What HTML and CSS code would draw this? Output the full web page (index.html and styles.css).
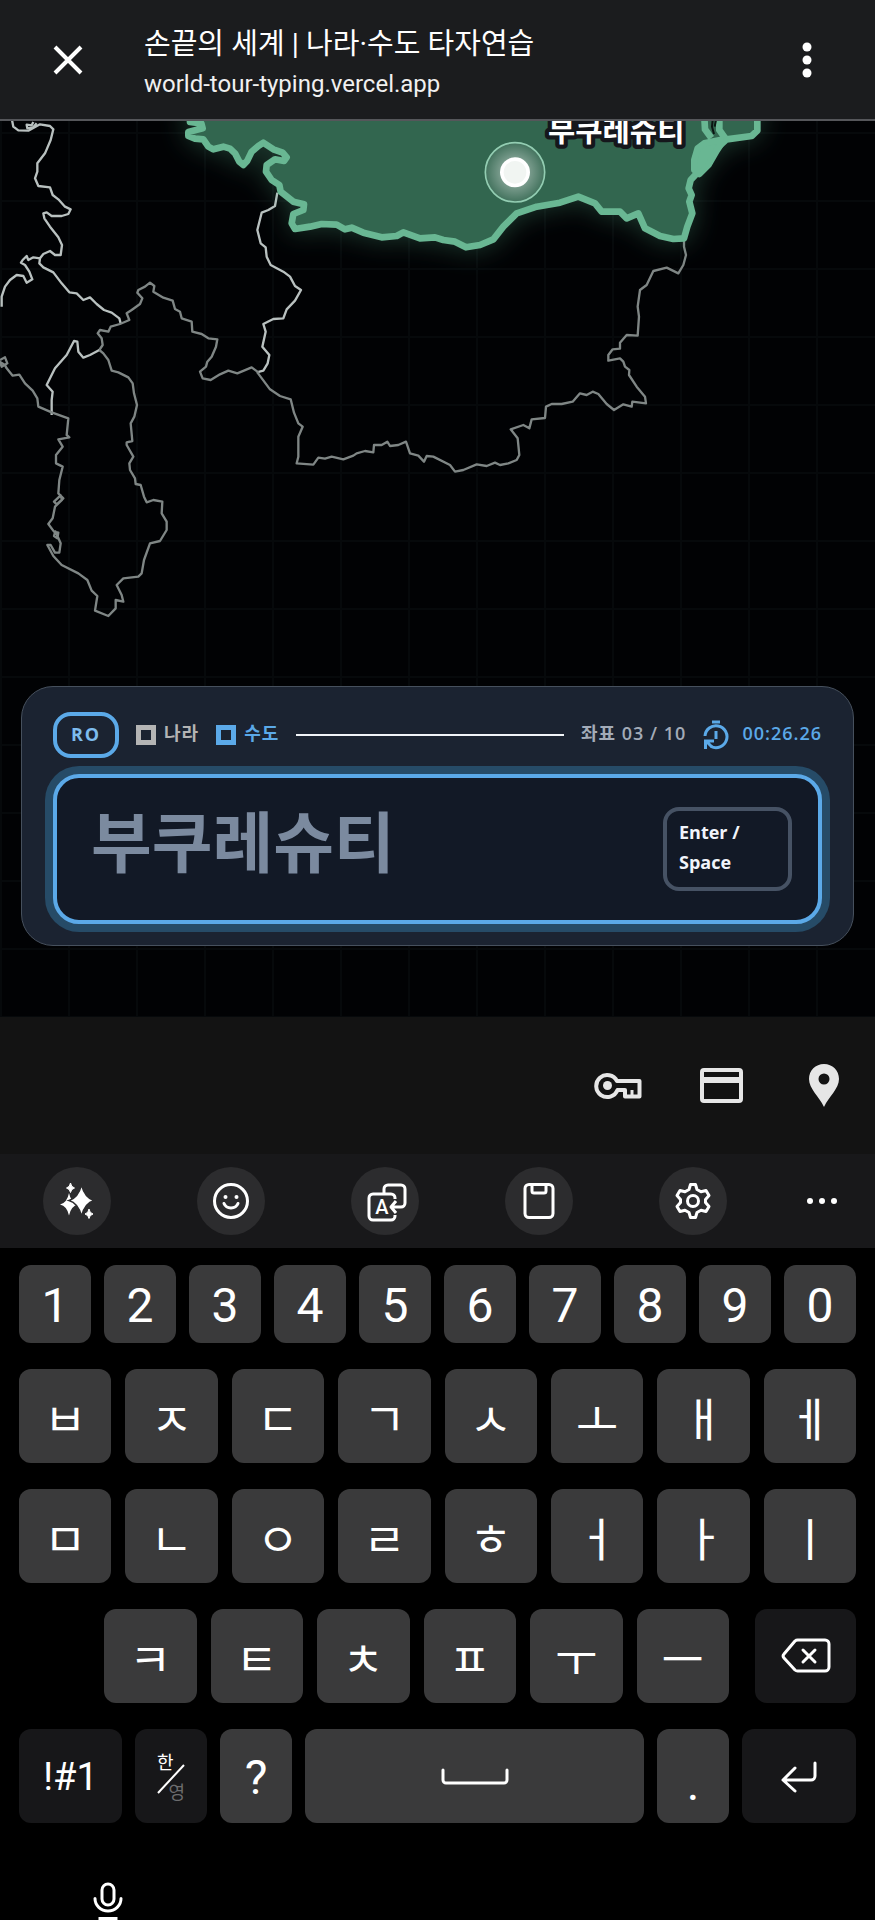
FILE: index.html
```html
<!DOCTYPE html>
<html lang="ko">
<head>
  <meta charset="UTF-8" />
  <meta name="viewport" content="width=device-width, initial-scale=1.0"/>
  <title>손끝의 세계 | 나라·수도 타자연습</title>
  <link rel="stylesheet" href="styles.css">
</head>
<body>
  <header class="topbar">
    <button class="icon-btn" aria-label="닫기">
      <svg width="30" height="30" viewBox="0 0 30 30"><path d="M2 2l26 26M28 2L2 28" stroke="#fff" stroke-width="4" fill="none"/></svg>
    </button>
    <div class="page-info">
      <h1>손끝의 세계 | 나라·수도 타자연습</h1>
      <a href="#">world-tour-typing.vercel.app</a>
    </div>
    <button class="icon-btn" aria-label="메뉴">
      <svg width="10" height="36" viewBox="0 0 10 36" fill="#fff"><circle cx="5" cy="5" r="4.5"/><circle cx="5" cy="18" r="4.5"/><circle cx="5" cy="31" r="4.5"/></svg>
    </button>
  </header>

  <main class="stage">
    <svg class="map" viewBox="0 0 2625 2688" preserveAspectRatio="xMidYMin slice">
      <defs>
        <radialGradient id="halo">
          <stop offset="0.4" stop-color="#fff" stop-opacity="0.4"/>
          <stop offset="1" stop-color="#fff" stop-opacity="0.08"/>
        </radialGradient>
        <filter id="glow" x="-20%" y="-30%" width="140%" height="170%">
          <feDropShadow dx="0" dy="0" stdDeviation="40" flood-color="#5fbf94" flood-opacity="0.3"/>
        </filter>
      </defs>

      <!-- Serbia, Bosnia, Kosovo -->
      <g class="border" transform="translate(0 -33)">
        <path d="M35 25L40 50L55 61L85 62L120 43L150 48L160 58L152 90L135 130L112 160L112 185L105 205L115 228L150 232L158 255L175 268L195 290L212 298L205 312L185 318L155 318L140 307L130 310L133 325L150 350L175 382L186 405L182 435L165 435L150 423L130 432L120 445L100 442L85 450L80 438L68 450L63 458L75 465L88 485L97 508L80 518L70 498L50 495L30 510L15 530L5 560L5 590"/>
        <path d="M110 40L98 53L82 55L80 44L95 46L100 36"/>
        <path d="M120 445L118 460L130 472L160 487L185 520L208 547L230 550L250 570L270 562L290 582L312 600L335 608L358 625L362 640"/>
        <path d="M832 248L825 288L805 300L785 308L772 360L782 400L797 412L800 440L812 465L850 485L870 500L885 528L903 540L885 572L860 598L850 625L820 627L790 642L797 665L787 710L808 735L803 760L790 782L770 787"/>
        <path class="dim" d="M298 720L308 705L305 685L293 670L300 660L325 665L332 650L360 642L388 630L380 610L395 600L420 582L427 565L412 548L415 540L435 530L450 518L463 528L460 545L490 563L518 572L525 597L540 605L545 625L575 635L577 665L605 672L625 685L652 688L648 710L635 740L622 755L618 770L600 785L608 805L632 810L660 793L685 782L712 790L755 772L775 787"/>
      </g>

      <!-- Montenegro, Albania -->
      <g class="border" transform="translate(0 657)">
        <path d="M155 225L155 180L158 155L140 135L165 85L200 45L222 3L232 5L235 35L250 53L270 45L298 30"/>
        <path class="dim" d="M0 60L15 52L22 70L5 80L0 66L14 74L20 85L38 107L58 104L75 130L98 152L112 175L115 200L155 217L205 235L200 285L208 292L175 298L188 320L168 345L168 370L188 380L178 420L175 460L190 475L170 493L162 485L182 466L186 480L165 500L158 535L145 552L162 575L175 578L172 595L162 588L166 574L182 610L178 638L165 638L152 615L142 615L160 648L185 675L235 700L262 720L275 752L292 768L285 812L325 828L347 805L347 780L370 785L365 765L350 735L370 715L415 710L425 700L432 660L450 610L480 603L500 570L500 545L485 520L487 485L460 480L440 487L432 470L422 435L407 432L405 415L390 390L388 370L400 350L380 315L380 307L397 303L392 250L403 230L411 195L402 160L398 130L385 112L355 97L335 92L325 60L310 40L298 30"/>
      </g>

      <!-- Bulgaria -->
      <g class="border" transform="translate(750 207)">
        <path class="dim" d="M22 547L60 598L90 618L122 628L132 668L145 700L158 710L145 740L145 800L140 820L190 824L205 803L225 806L245 800L280 808L310 797L320 790L345 783L370 787L372 765L395 765L412 755L420 768L445 765L468 755L480 790L505 797L522 815L530 798L550 800L600 825L615 845L640 840L680 823L710 828L735 818L750 825L775 820L800 810L808 795L803 745L782 718L820 705L838 715L845 688L885 684L888 650L905 642L935 642L968 635L990 610L1010 615L1028 605L1045 612L1070 642L1092 660L1120 643L1145 650L1147 635L1188 640L1185 620L1160 590L1137 555L1138 540L1125 530L1120 515L1110 505L1075 512L1075 495L1088 478L1110 476L1110 458L1130 435L1163 437L1167 380L1163 350L1170 300L1190 285L1210 243L1250 233L1285 250L1300 225L1308 195L1302 170L1302 150"/>
      </g>

      <!-- Romania -->
      <g transform="translate(0 -33)">
        <path class="target" filter="url(#glow)" d="M570 -60L570 36L604 40L608 55L565 66L565 78L585 86L610 88L625 110L640 118L670 110L690 116L705 130L718 155L730 165L742 152L755 125L775 108L790 98L820 118L848 128L860 142L852 153L825 148L800 165L798 185L815 210L838 225L842 245L880 275L912 283L910 300L880 312L875 340L885 357L930 350L965 342L1010 344L1035 358L1055 353L1090 368L1145 382L1190 378L1210 367L1260 385L1305 382L1330 390L1365 395L1398 412L1440 405L1480 388L1510 350L1550 310L1610 290L1680 278L1735 260L1785 280L1805 305L1860 305L1880 325L1915 310L1935 355L1980 378L2020 387L2052 385L2062 350L2077 310L2068 275L2075 255L2066 235L2072 210L2095 185L2125 140L2150 115L2180 88L2255 78L2272 62L2272 -60Z"/>
        <path class="delta" d="M2113 100L2172 88L2150 122L2125 165L2098 192L2083 180L2083 150L2093 115Z"/>
        <path class="target-line" d="M2113 20L2115 58L2134 84M2158 20L2158 60L2175 84"/>
        <path class="inlet" d="M2139 20L2136 50L2142 72M2148 30L2144 50"/>
        <circle cx="1545" cy="187" r="89" fill="url(#halo)" stroke="#93cdb2" stroke-width="5"/>
        <circle cx="1545" cy="187" r="45" fill="#fff"/>
        <circle cx="1545" cy="187" r="34" fill="#f1f5f2"/>
        <text class="city" x="1644" y="94">부쿠레슈티</text>
      </g>
    </svg>

    <section class="card">
      <div class="status">
        <span class="code">RO</span>
        <div class="legend">
          <span class="legend-item"><i class="box"></i><span>나라</span></span>
          <span class="legend-item active"><i class="box"></i><span>수도</span></span>
        </div>
        <span class="rule"></span>
        <span class="count">좌표 03 / 10</span>
        <span class="timer">
          <svg width="26" height="30" viewBox="0 0 26 30" fill="none" stroke="#5ba9e8" stroke-width="3"><path d="M2 16A11 11 0 1 1 8 26.500M9 2h8M13 11v8"/><path d="M11 21H2.500V29M3 21l6 6"/></svg>
          <time>00:26.26</time>
        </span>
      </div>
      <div class="answer">
        <input type="text" placeholder="부쿠레슈티" aria-label="수도 이름">
        <kbd>Enter / Space</kbd>
      </div>
    </section>
  </main>

  <div class="autofill">
    <button class="icon-btn" aria-label="비밀번호">
      <svg width="48" height="28" viewBox="0 0 48 28" fill="none" stroke="#e6e6e6" stroke-width="4"><path d="M23 9H45.500V24.500H31V18H23.500A11 11 0 1 1 23 9Z" stroke-linejoin="round"/><path d="M38 24v-6" stroke-width="3"/><circle cx="13.500" cy="13.500" r="4.500" fill="#e6e6e6" stroke="none"/></svg>
    </button>
    <button class="icon-btn" aria-label="결제 수단">
      <svg width="43" height="35" viewBox="0 0 43 35"><rect x="2" y="2" width="39" height="31" rx="2" fill="none" stroke="#e6e6e6" stroke-width="4"/><path d="M2 9h39v6H2z" fill="#e6e6e6"/></svg>
    </button>
    <button class="icon-btn" aria-label="주소">
      <svg width="30" height="43" viewBox="0 0 30 43"><path fill="#e6e6e6" fill-rule="evenodd" d="M15 0C6.500 0 0 6.500 0 15C0 25 10 32 15 43C20 32 30 25 30 15C30 6.500 23.500 0 15 0ZM15 9.500a5.500 5.500 0 1 1 0 11a5.500 5.500 0 1 1 0-11Z"/></svg>
    </button>
  </div>

  <div class="tools">
    <div class="tool-list">
      <button class="tool" aria-label="AI">
        <svg width="40" height="40" viewBox="0 0 40 40" fill="#fff"><path d="M12 12Q14 22 21 23.500Q14 25 12 34.500Q10 25 3 23.500Q10 22 12 12Z"/><path d="M24.500 4Q28 17 37 19.500Q28 22 24.500 35Q21 22 12 19.500Q21 17 24.500 4Z" stroke="#2c2c2e" stroke-width="1.5"/><path d="M13.500 2Q14 6 17.500 7Q14 8 13.500 11.500Q13 8 9.500 7Q13 6 13.500 2Z" stroke="#fff"/><path d="M32 28Q32.500 32 36 33Q32.500 34 32 37.500Q31.500 34 28 33Q31.500 32 32 28Z" stroke="#fff"/></svg>
      </button>
      <button class="tool" aria-label="이모티콘">
        <svg width="40" height="40" viewBox="0 0 40 40" fill="none" stroke="#fff" stroke-width="3"><circle cx="20" cy="20" r="16.500"/><path d="M13 22.500a7.500 7 0 0 0 14 0" stroke-linecap="round"/><circle cx="14.500" cy="16" r="2" fill="#fff" stroke="none"/><circle cx="25.500" cy="16" r="2" fill="#fff" stroke="none"/></svg>
      </button>
      <button class="tool" aria-label="번역">
        <svg width="44" height="44" viewBox="0 0 44 44" fill="none" stroke="#fff" stroke-width="3" stroke-linejoin="round"><path d="M21 14V10a4 4 0 0 1 4-4H38a4 4 0 0 1 4 4V24a4 4 0 0 1-4 4H29M33 22l-5 6l5 6"/><path d="M32 20V19a4 4 0 0 0-4-4H10a4 4 0 0 0-4 4V37a4 4 0 0 0 4 4H28a4 4 0 0 0 4-4V36"/><text class="tool-letter" x="19" y="35" text-anchor="middle">A</text></svg>
      </button>
      <button class="tool" aria-label="클립보드">
        <svg width="40" height="40" viewBox="0 0 40 40" fill="none" stroke="#fff" stroke-width="3"><rect x="6" y="3.500" width="28" height="33" rx="4"/><path d="M13 4v6a2 2 0 0 0 2 2h10a2 2 0 0 0 2-2V4"/></svg>
      </button>
      <button class="tool" aria-label="설정">
        <svg width="40" height="40" viewBox="0 0 40 40" fill="none" stroke="#fff" stroke-width="3" stroke-linejoin="round"><path d="M17.500 3.500h5l1.500 5l4 2.300l5-1.300l3 5l-3.500 4v3l3.500 4l-3 5l-5-1.300l-4 2.300l-1.500 5h-5l-1.500-5l-4-2.300l-5 1.300l-3-5l3.500-4v-3l-3.500-4l3-5l5 1.300l4-2.300z"/><circle cx="20" cy="20" r="5.500"/></svg>
      </button>
    </div>
    <button class="icon-btn" aria-label="더보기">
      <svg width="32" height="8" viewBox="0 0 32 8" fill="#fff"><circle cx="4" cy="4" r="3"/><circle cx="16" cy="4" r="3"/><circle cx="28" cy="4" r="3"/></svg>
    </button>
  </div>

  <div class="keyboard">
    <div class="row numbers">
      <button class="key">1</button>
      <button class="key">2</button>
      <button class="key">3</button>
      <button class="key">4</button>
      <button class="key">5</button>
      <button class="key">6</button>
      <button class="key">7</button>
      <button class="key">8</button>
      <button class="key">9</button>
      <button class="key">0</button>
    </div>
    <div class="row letters">
      <button class="key">ㅂ</button>
      <button class="key">ㅈ</button>
      <button class="key">ㄷ</button>
      <button class="key">ㄱ</button>
      <button class="key">ㅅ</button>
      <button class="key">ㅗ</button>
      <button class="key">ㅐ</button>
      <button class="key">ㅔ</button>
    </div>
    <div class="row letters">
      <button class="key">ㅁ</button>
      <button class="key">ㄴ</button>
      <button class="key">ㅇ</button>
      <button class="key">ㄹ</button>
      <button class="key">ㅎ</button>
      <button class="key">ㅓ</button>
      <button class="key">ㅏ</button>
      <button class="key">ㅣ</button>
    </div>
    <div class="row letters row-short">
      <button class="key">ㅋ</button>
      <button class="key">ㅌ</button>
      <button class="key">ㅊ</button>
      <button class="key">ㅍ</button>
      <button class="key">ㅜ</button>
      <button class="key">ㅡ</button>
      <button class="key dark backspace" aria-label="지우기">
        <svg width="50" height="36" viewBox="0 0 50 36" fill="none" stroke="#fff" stroke-width="3" stroke-linejoin="round" stroke-linecap="round"><path d="M17 2H44a4 4 0 0 1 4 4V29a4 4 0 0 1-4 4H17a4 4 0 0 1-3-1L3 20a3 3 0 0 1 0-4L14 3a4 4 0 0 1 3-1z"/><path d="M22 12l12 12M34 12L22 24"/></svg>
      </button>
    </div>
    <div class="row numbers row-bottom">
      <button class="key dark symbols">!#1</button>
      <button class="key dark lang">
        <span class="ko">한</span>
        <svg width="28" height="32" viewBox="0 0 28 32"><path d="M1 31L27 3" stroke="#fff" stroke-width="2"/></svg>
        <span class="en">영</span>
      </button>
      <button class="key mark">?</button>
      <button class="key space" aria-label="스페이스">
        <svg width="68" height="18" viewBox="0 0 68 18" fill="none" stroke="#fff" stroke-width="3" stroke-linecap="round"><path d="M2 2V12a3 3 0 0 0 3 3H63a3 3 0 0 0 3-3V2"/></svg>
      </button>
      <button class="key mark period">.</button>
      <button class="key dark enter" aria-label="엔터">
        <svg width="36" height="32" viewBox="0 0 36 32" fill="none" stroke="#fff" stroke-width="3" stroke-linecap="round" stroke-linejoin="round"><path d="M34 2V15a4 4 0 0 1-4 4H3M14 7L2 19l12 11"/></svg>
      </button>
    </div>
  </div>

  <footer class="bottom">
    <button class="icon-btn" aria-label="음성 입력">
      <svg width="30" height="38" viewBox="0 0 30 38" fill="none" stroke="#fff" stroke-width="3"><rect x="9" y="2" width="12" height="21" rx="6"/><path d="M2 16.500a13 12.500 0 0 0 26 0" stroke-linecap="round"/><path d="M5.500 36.500h19"/></svg>
    </button>
  </footer>
</body>
</html>
```

FILE: styles.css
```css
* {
  box-sizing: border-box;
}

body {
  margin: 0;
  background-color: #000;
  color: #fff;
  font-family: Roboto, "Noto Sans CJK KR", sans-serif;
}

button {
  padding: 0;
  border: none;
  background: none;
  color: inherit;
  font-family: inherit;
  cursor: pointer;
}

svg {
  display: block;
}

.icon-btn {
  width: 60px;
  height: 60px;
  display: flex;
  align-items: center;
  justify-content: center;
}

/* browser bar */
.topbar {
  display: flex;
  align-items: center;
  height: 121px;
  padding: 0 38px;
  background-color: #1b1c1e;
  border-bottom: 2px solid #55565a;
}

.page-info {
  flex: 1;
  padding: 8px 0 0 46px;
}

.page-info h1 {
  margin: 0;
  font-size: 29px;
  line-height: 40px;
  font-weight: 400;
}

.page-info a {
  display: block;
  font-size: 24px;
  line-height: 40px;
  color: #f0f0f0;
  text-decoration: none;
}

/* map */
.stage {
  position: relative;
  display: flex;
  flex-direction: column;
  justify-content: flex-end;
  height: 896px;
  padding: 0 21px 71px;
  background-color: #010204;
  background-image:
    linear-gradient(#06090b 2px, transparent 2px),
    linear-gradient(90deg, #06090b 2px, transparent 2px);
  background-size: 68px 68px;
  background-position: 0 11px;
}

.map {
  position: absolute;
  top: 0;
  left: 0;
  width: 100%;
  height: 100%;
}

.border path {
  fill: none;
  stroke: #b9c1c0;
  stroke-width: 7;
  stroke-linejoin: round;
}

.border .dim {
  stroke: #7f8685;
}

.target {
  fill: #33664f;
  stroke: #69b793;
  stroke-width: 20;
  stroke-linejoin: round;
}

.target-line {
  fill: none;
  stroke: #69b793;
  stroke-width: 20;
}

.inlet {
  fill: none;
  stroke: #0b1512;
  stroke-width: 6;
}

.delta {
  fill: #69b793;
  stroke: #69b793;
  stroke-width: 20;
  stroke-linejoin: round;
}

.city {
  font-family: "Noto Sans CJK KR", sans-serif;
  font-size: 89px;
  font-weight: 700;
  fill: #fff;
  stroke: #15171c;
  stroke-width: 26;
  stroke-linejoin: round;
  paint-order: stroke;
}

/* typing card */
.card {
  position: relative;
  padding: 25px 31px 21px;
  background-color: #1b2331;
  border: 1px solid #46505d;
  border-radius: 32px;
  font-family: "Open Sans", "Noto Sans CJK KR", sans-serif;
}

.status {
  display: flex;
  align-items: center;
  gap: 17px;
  height: 46px;
  margin-bottom: 16px;
  font-size: 18px;
  line-height: 24px;
  font-weight: 600;
  letter-spacing: 1px;
  color: #a3abb8;
  white-space: nowrap;
}

.code {
  width: 66px;
  height: 46px;
  border: 4px solid #5ba9e8;
  border-radius: 18px;
  line-height: 36px;
  text-align: center;
  font-weight: 700;
  letter-spacing: 2px;
  color: #7dbbee;
}

.legend {
  display: flex;
  gap: 17px;
}

.legend-item {
  display: flex;
  align-items: center;
  gap: 8px;
  color: #b4b4b4;
}

.legend-item.active {
  color: #5ba9e8;
}

.legend-item span,
.count,
.timer time {
  padding-bottom: 4px;
}

.box {
  width: 20px;
  height: 20px;
  border: 5px solid currentColor;
}

.rule {
  flex: 1;
  height: 2px;
  background-color: #f1f4f8;
}

.timer {
  display: flex;
  align-items: center;
  gap: 13px;
  color: #5ba9e8;
}

.answer {
  display: flex;
  align-items: center;
  height: 150px;
  padding: 0 26px 0 34px;
  background-color: #121926;
  border: 4px solid #5ba9e8;
  border-radius: 26px;
  box-shadow: 0 0 0 8px #264b67;
}

.answer input {
  flex: 1;
  min-width: 0;
  padding: 0 0 22px;
  border: none;
  outline: none;
  background: none;
  color: #fff;
  font-family: "Noto Sans CJK KR", sans-serif;
  font-size: 66px;
  line-height: 90px;
  font-weight: 700;
}

.answer input::placeholder {
  color: #7b8a9f;
  opacity: 1;
}

.answer kbd {
  width: 129px;
  padding: 6px 12px 10px;
  border: 4px solid #465264;
  border-radius: 16px;
  font-family: "Open Sans", sans-serif;
  font-size: 18px;
  line-height: 30px;
  font-weight: 700;
  color: #f1f4fb;
}

/* autofill + toolbar */
.autofill {
  display: flex;
  justify-content: flex-end;
  align-items: center;
  gap: 43px;
  height: 137px;
  padding: 0 21px;
  background-color: #131313;
}

.tools {
  display: flex;
  align-items: center;
  gap: 65px;
  height: 94px;
  padding: 0 23px 0 43px;
  background-color: #18181a;
}

.tool-list {
  flex: 1;
  display: flex;
  justify-content: space-between;
}

.tool {
  width: 68px;
  height: 68px;
  display: flex;
  align-items: center;
  justify-content: center;
  border-radius: 50%;
  background-color: #2c2c2e;
}

.tool-letter {
  font-size: 20px;
  font-weight: 500;
  fill: #fff;
  stroke: none;
}

/* keyboard */
.keyboard {
  display: flex;
  flex-direction: column;
  gap: 26px;
  padding: 17px 19px 0;
}

.row {
  display: flex;
  gap: 14px;
}

.key {
  flex: 1;
  display: flex;
  align-items: center;
  justify-content: center;
  min-width: 0;
  height: 94px;
  border-radius: 12px;
  background-color: #3a3a3b;
}

.dark {
  background-color: #171719;
}

.numbers {
  gap: 13px;
}

.numbers .key {
  height: 78px;
  padding-top: 2px;
  font-size: 48px;
}

.letters .key {
  font-family: "Noto Sans CJK KR", sans-serif;
  font-size: 46px;
  font-weight: 400;
  line-height: 60px;
}

.row-short {
  padding-left: 85px;
}

.letters .backspace {
  flex: 0 0 101px;
  margin-left: 12px;
}

.row-bottom .key {
  height: 94px;
}

.row-bottom .symbols {
  flex: 0 0 103px;
  font-size: 38px;
}

.row-bottom .lang {
  flex: 0 0 72px;
  display: grid;
  padding: 22px 15px 18px;
  font-size: 18px;
  line-height: 24px;
}

.lang span,
.lang svg {
  grid-area: 1 / 1;
}

.lang .ko {
  place-self: start;
}

.lang svg {
  place-self: center;
}

.lang .en {
  place-self: end;
  color: #6c6c6e;
}

.row-bottom .mark {
  flex: 0 0 72px;
}

.row-bottom .enter {
  flex: 0 0 114px;
}

.row-bottom .period {
  padding-top: 14px;
}

.bottom {
  height: 97px;
  padding: 48px 78px 0;
  overflow: hidden;
}
```
